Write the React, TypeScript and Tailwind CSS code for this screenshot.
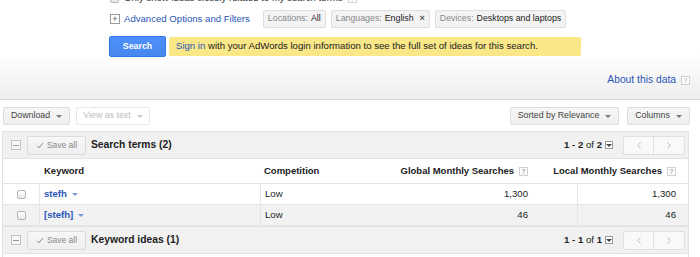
import React from "react";

function Caret({ color = "border-t-[#777]" }: { color?: string }) {
  return (
    <span
      className={`inline-block h-0 w-0 border-x-[3px] border-t-[3px] border-x-transparent ${color}`}
    />
  );
}

function Help() {
  return (
    <span className="inline-flex h-[9px] w-[9px] items-center justify-center border border-[#d0d0d0] bg-white text-[7px] leading-none text-[#aaa]">
      ?
    </span>
  );
}

function Checkbox() {
  return (
    <span className="inline-block h-[9px] w-[9px] rounded-[2px] border border-[#b5b5b5] bg-gradient-to-b from-white to-[#e8e8e8]" />
  );
}

function Chip({ label, value, close }: { label: string; value: string; close?: boolean }) {
  return (
    <span className="flex h-[18px] items-center gap-[3px] rounded-[2px] border border-[#dedede] bg-[#f3f3f3] px-[4px] text-[8.8px] whitespace-nowrap">
      <span className="text-[#888]">{label}</span>
      <span className="text-[#222]">{value}</span>
      {close && <span className="ml-[3px] text-[9px] font-bold text-[#555]">×</span>}
    </span>
  );
}

function SectionHeader({ title, range, total }: { title: string; range: string; total: string }) {
  return (
    <div className="flex h-[28px] items-center border-y border-[#e2e2e2] bg-[#f1f1f1]">
      {/* collapse box */}
      <span className="ml-[8px] flex h-[10px] w-[10px] items-center justify-center border border-[#c2c2c2] bg-[#f8f8f8]">
        <span className="h-px w-[6px] bg-[#999]" />
      </span>
      <button className="ml-[6px] flex h-[19px] w-[59px] items-center justify-center gap-[3px] rounded-[2px] border border-[#dcdcdc] bg-gradient-to-b from-[#f7f7f7] to-[#efefef] text-[8.5px] text-[#888]">
        <svg width="8" height="7" viewBox="0 0 8 7" fill="none">
          <path d="M1 3.8 3 5.8 7 1" stroke="#888" strokeWidth="1" />
        </svg>
        Save all
      </button>
      <span className="ml-[5px] text-[10.3px] font-bold text-[#222]">{title}</span>
      <div className="ml-auto flex items-center">
        <span className="text-[9.6px] text-[#222]">
          <b>{range}</b> of <b>{total}</b>
        </span>
        <span className="ml-[3px] flex h-[8px] w-[8px] items-center justify-center border border-[#999] bg-white">
          <Caret color="border-t-[#444]" />
        </span>
        <div className="ml-[10px] mr-[3px] flex">
          <span className="flex h-[19px] w-[31px] items-center justify-center rounded-l-[2px] border border-[#e0e0e0] bg-[#f9f9f9]">
            <svg width="4" height="7" viewBox="0 0 4 7" fill="none">
              <path d="M3.5 0.5 0.8 3.5 3.5 6.5" stroke="#bbb" strokeWidth="1" />
            </svg>
          </span>
          <span className="-ml-px flex h-[19px] w-[32px] items-center justify-center rounded-r-[2px] border border-[#e0e0e0] bg-[#f9f9f9]">
            <svg width="4" height="7" viewBox="0 0 4 7" fill="none">
              <path d="M0.5 0.5 3.2 3.5 0.5 6.5" stroke="#bbb" strokeWidth="1" />
            </svg>
          </span>
        </div>
      </div>
    </div>
  );
}

function DataRow({ kw, comp, global, local, shaded }: { kw: string; comp: string; global: string; local: string; shaded?: boolean }) {
  return (
    <div className={`flex h-[21px] items-stretch border-b border-[#e6e6e6] text-[9.6px] ${shaded ? "bg-[#f2f2f2]" : "bg-white"}`}>
      <div className="flex w-[36px] items-center justify-center pl-px">
        <Checkbox />
      </div>
      <div className="flex w-[221px] items-center gap-[5px] border-l border-[#e6e6e6] pl-[4px] font-bold text-[#2a55b8]">
        {kw}
        <Caret color="border-t-[#7a9ad8]" />
      </div>
      <div className="flex w-[130px] items-center border-l border-[#e6e6e6] pl-[4px] text-[#222]">{comp}</div>
      <div className="flex w-[187px] items-center justify-end pr-[49px] text-[#222]">{global}</div>
      <div className="flex w-[111px] items-center justify-end border-l border-[#e6e6e6] pr-[12px] text-[#222]">{local}</div>
    </div>
  );
}

export default function App() {
  return (
    <div className="h-[257px] w-[700px] overflow-hidden bg-white font-['Liberation_Sans',Arial,sans-serif] text-[#222]">
      {/* Search options */}
      <div className="flex h-[100px] flex-col border-b border-[#d9d9d9] bg-gradient-to-b from-white from-55% to-[#eeeeee] pl-[110px]">
        <div className="-mt-[9px] flex h-[14px] items-center gap-[5px] text-[9.6px] text-[#333]">
          <Checkbox />
          <span>Only show ideas closely related to my search terms</span>
          <Help />
        </div>
        <div className="mt-[5px] flex h-[18px] items-center">
          <span className="flex h-[10px] w-[10px] items-center justify-center border border-[#999] text-[9px] leading-none text-[#555]">
            +
          </span>
          <span className="ml-[4px] text-[9.6px] text-[#2a55b8]">Advanced Options and Filters</span>
          <div className="ml-[13px] flex gap-[5px]">
            <Chip label="Locations:" value="All" />
            <Chip label="Languages:" value="English" close />
            <Chip label="Devices:" value="Desktops and laptops" />
          </div>
        </div>
        <div className="mt-[8px] flex items-center">
          <button className="-ml-px flex h-[21px] w-[57px] items-center justify-center rounded-[2px] border border-[#3079ed] bg-gradient-to-b from-[#4d90fe] to-[#4787ed] text-[8.8px] font-bold text-white">
            Search
          </button>
          <div className="ml-[3px] flex h-[19px] w-[412px] items-center rounded-[2px] bg-[#f9e788] pl-[7px] text-[9.6px] whitespace-nowrap text-[#222]">
            <span className="text-[#2a55b8]">Sign in</span>&nbsp;with your AdWords login information to see the full set of ideas for this search.
          </div>
        </div>
        <div className="mt-[17px] flex h-[12px] items-center justify-end gap-[5px] pr-[10px]">
          <span className="text-[10.3px] text-[#2a55b8]">About this data</span>
          <Help />
        </div>
      </div>

      {/* Toolbar */}
      <div className="mt-[7px] flex h-[18px] items-center px-[3px] text-[8.8px]">
        <button className="flex h-[18px] w-[67px] items-center justify-center gap-[6px] rounded-[2px] border border-[#dcdcdc] bg-gradient-to-b from-[#f6f6f6] to-[#efefef] text-[#444]">
          Download
          <Caret />
        </button>
        <button className="ml-[6px] flex h-[18px] w-[74px] items-center justify-center gap-[6px] rounded-[2px] border border-[#e8e8e8] bg-white text-[#bbb]">
          View as text
          <Caret color="border-t-[#ccc]" />
        </button>
        <div className="ml-auto flex gap-[8px] pr-[7px]">
          <button className="flex h-[18px] w-[109px] items-center justify-center gap-[6px] rounded-[2px] border border-[#dcdcdc] bg-gradient-to-b from-[#f6f6f6] to-[#efefef] text-[#444]">
            Sorted by Relevance
            <Caret />
          </button>
          <button className="flex h-[18px] w-[63px] items-center justify-center gap-[6px] rounded-[2px] border border-[#dcdcdc] bg-gradient-to-b from-[#f6f6f6] to-[#efefef] text-[#444]">
            Columns
            <Caret />
          </button>
        </div>
      </div>

      {/* Results table */}
      <div className="ml-[2px] mt-[6px] w-[687px] border-x border-[#e2e2e2]">
        <SectionHeader title="Search terms (2)" range="1 - 2" total="2" />
        <div className="flex h-[25px] items-center border-b border-[#e2e2e2] bg-white text-[9.5px] font-bold text-[#222]">
          <div className="w-[36px]" />
          <div className="w-[221px] pl-[5px]">Keyword</div>
          <div className="w-[130px] pl-[4px]">Competition</div>
          <div className="flex w-[138px] items-center justify-end gap-[5px] whitespace-nowrap">
            Global Monthly Searches
            <Help />
          </div>
          <div className="flex w-[148px] items-center justify-end gap-[5px] whitespace-nowrap">
            Local Monthly Searches
            <Help />
          </div>
        </div>
        <DataRow kw="stefh" comp="Low" global="1,300" local="1,300" />
        <DataRow kw="[stefh]" comp="Low" global="46" local="46" shaded />
        <SectionHeader title="Keyword ideas (1)" range="1 - 1" total="1" />
        <div className="h-[10px] bg-white" />
      </div>
    </div>
  );
}
